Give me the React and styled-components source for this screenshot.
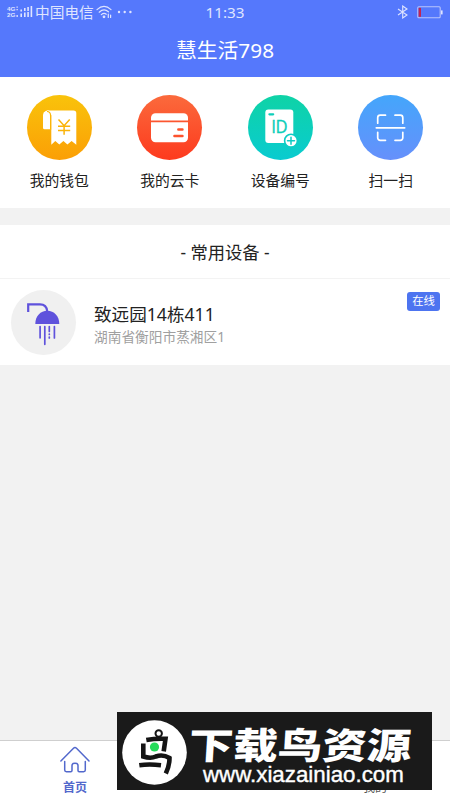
import styled, { createGlobalStyle } from 'styled-components';

const actions = [
  { label: '我的钱包', from: '#f9c30b', to: '#fb9f06', Icon: WalletIcon },
  { label: '我的云卡', from: '#fb6a3c', to: '#fd3a1e', Icon: CardIcon },
  { label: '设备编号', from: '#0fd3a6', to: '#09cbd0', Icon: DeviceIdIcon },
  { label: '扫一扫', from: '#44a6fb', to: '#6690fb', Icon: ScanIcon },
];

export default function App() {
  return (
    <>
      <GlobalStyle />
      <Screen>
        <Header>
          <StatusBar>
            <StatusSide>
              <SignalIcon />
              <Carrier>中国电信</Carrier>
              <WifiIcon />
              <DotsIcon />
            </StatusSide>
            <Clock>11:33</Clock>
            <StatusSide $end>
              <BluetoothIcon />
              <BatteryIcon />
            </StatusSide>
          </StatusBar>
          <Title>慧生活798</Title>
        </Header>

        <Actions>
          {actions.map(({ label, from, to, Icon }) => (
            <Action key={label}>
              <ActionCircle $from={from} $to={to}>
                <Icon />
              </ActionCircle>
              <ActionLabel>{label}</ActionLabel>
            </Action>
          ))}
        </Actions>

        <Devices>
          <SectionTitle>- 常用设备 -</SectionTitle>
          <Device>
            <DeviceCircle>
              <ShowerIcon />
            </DeviceCircle>
            <DeviceInfo>
              <DeviceName>致远园14栋411</DeviceName>
              <DeviceAddress>湖南省衡阳市蒸湘区1</DeviceAddress>
            </DeviceInfo>
            <Status>在线</Status>
          </Device>
        </Devices>

        <TabBar>
          <Tab $active>
            <HomeIcon />
            <span>首页</span>
          </Tab>
          <Tab />
          <Tab>
            <span>我的</span>
          </Tab>
        </TabBar>

        <Watermark>
          <BirdLogo />
          <WatermarkText>
            <WatermarkName>下载鸟资源</WatermarkName>
            <WatermarkUrl>www.xiazainiao.com</WatermarkUrl>
          </WatermarkText>
        </Watermark>
      </Screen>
    </>
  );
}

function SignalIcon() {
  return (
    <svg width='26' height='14' viewBox='0 0 26 14' fill='#dfe4ff'>
      <SignalText x='0' y='6' textLength='8.5' lengthAdjust='spacingAndGlyphs'>4G</SignalText>
      <SignalText x='0' y='12.2' textLength='8.5' lengthAdjust='spacingAndGlyphs'>2G</SignalText>
      <path d='M9.500 1.500h1.300v1.300H9.500zM9.500 4h1.300v1.300H9.500zM9.500 10h1.300v2H9.500zM13.400 4.500h1.600v2h-1.600zM13.400 8.500h1.600V12h-1.600zM17 3h1.600v3H17zM17 7.500h1.600V12H17zM20.300 2h1.600v4h-1.600zM20.300 7h1.600v5h-1.600zM23.600 1h1.600v11h-1.600z' />
    </svg>
  );
}

function WifiIcon() {
  return (
    <svg width='17' height='14' viewBox='0 0 17 14' fill='none' stroke='#dfe4ff' strokeWidth='1.2' strokeLinecap='round'>
      <path d='M1 4.6Q8 -1.8 15 4.6M3.2 7.2Q8 3 12.4 6.8M5.3 9.6Q8 7.4 10.3 9.2' />
      <circle cx='8' cy='11.8' r='.8' fill='#dfe4ff' />
      <path d='M12.3 9v3.500M14.600 10v2.500' />
    </svg>
  );
}

function DotsIcon() {
  return (
    <svg width='18' height='4' viewBox='0 0 18 4' fill='#dfe4ff'>
      <circle cx='4' cy='2' r='1.2' />
      <circle cx='9.7' cy='2' r='1.2' />
      <circle cx='15.4' cy='2' r='1.2' />
    </svg>
  );
}

function BluetoothIcon() {
  return (
    <svg width='12' height='14' viewBox='0 0 12 14' fill='none' stroke='#dfe4ff' strokeWidth='1.1'>
      <path d='M1 4l9 6-4.3 3V1L10 4 1 10' />
    </svg>
  );
}

function BatteryIcon() {
  return (
    <svg width='26' height='13' viewBox='0 0 26 13'>
      <rect x='.8' y='.8' width='22.4' height='11' rx='1' fill='none' stroke='#b9c3fb' strokeWidth='1.1' />
      <rect x='1.6' y='1.8' width='2.4' height='9' fill='#c32450' />
      <rect x='24' y='4.4' width='1.6' height='4' fill='#dfe4ff' />
    </svg>
  );
}

function WalletIcon() {
  return (
    <svg width='65' height='65' viewBox='0 0 65 65' fill='#fff'>
      <path d='M20 15.500h26.500a2.800 2.800 0 0 1 2.800 2.800v31.400l-4.700-3.600-4.200 3.500-4-3.500-4.100 3.500-4-3.500-4 3.600V20z' />
      <path d='M16 20a4.300 4.300 0 0 1 7.400-3v17.200H17.500a1.500 1.500 0 0 1-1.500-1.500z' />
      <path d='M20 16.500q3.600 0 3.600 4.200v14' fill='none' stroke='#fab40a' strokeWidth='1.2' />
      <path d='M31.500 24.500l5.600 6.200 5.600-6.200M31 31.300h12.200M31 35.500h12.200M37.100 30.700v9' fill='none' stroke='#fab40a' strokeWidth='1.500' />
    </svg>
  );
}

function CardIcon() {
  return (
    <svg width='65' height='65' viewBox='0 0 65 65' fill='#fff'>
      <path d='M14 25.500v-2.700a4.500 4.500 0 0 1 4.500-4.500h28a4.500 4.500 0 0 1 4.500 4.500v2.700z' />
      <path d='M14 27.200h37v15.600a4.500 4.500 0 0 1-4.500 4.500h-28a4.500 4.500 0 0 1-4.500-4.500z' />
      <path d='M41.300 34.500h4.200M37.400 41h8.100' stroke='#fc522d' strokeWidth='2.400' strokeLinecap='round' />
    </svg>
  );
}

function DeviceIdIcon() {
  return (
    <svg width='65' height='65' viewBox='0 0 65 65'>
      <rect x='17.300' y='14.400' width='28' height='33.600' rx='3' fill='#fff' />
      <path d='M21.400 19.300h3.800' stroke='#0dceb9' strokeWidth='2.200' strokeLinecap='round' />
      <IdText x='23.400' y='37.500' textLength='15.800' lengthAdjust='spacingAndGlyphs'>ID</IdText>
      <circle cx='43' cy='45.700' r='6.400' fill='#fff' stroke='#0cccc4' strokeWidth='1.600' />
      <path d='M39.500 45.700h7M43 42.200v7' stroke='#0cccc4' strokeWidth='1.500' strokeLinecap='round' />
    </svg>
  );
}

function ScanIcon() {
  return (
    <svg width='65' height='65' viewBox='0 0 65 65' fill='none' stroke='#fff' strokeWidth='1.700' strokeLinecap='round'>
      <path d='M19.700 28.200v-5.500a2.500 2.500 0 0 1 2.500-2.500h5.300M37 20.200h5.300a2.500 2.500 0 0 1 2.500 2.500v5.500M44.800 37.300v5.500a2.500 2.500 0 0 1-2.500 2.500H37M27.500 45.300h-5.300a2.500 2.500 0 0 1-2.500-2.500v-5.500M18.300 32.800h28.400' />
    </svg>
  );
}

function ShowerIcon() {
  return (
    <svg width='65' height='65' viewBox='0 0 65 65' fill='none' stroke='#5f52dc' strokeWidth='2.200'>
      <path d='M17.200 22v-7.700H29q6.600 0 7.200 7' />
      <path d='M24.300 34c0-8 5.200-13.300 12-13.300s12 5.300 12 13.300z' fill='#5f52dc' stroke='none' />
      <g strokeWidth='1.700' strokeLinecap='round'>
        <path d='M29.100 36.500v11.300M33.800 36.500v17.800M38.300 36.500v5M38.300 44v.500M38.300 47v1M43.400 36.500v11.500' />
      </g>
    </svg>
  );
}

function HomeIcon() {
  return (
    <svg width='30' height='27' viewBox='0 0 30 27' fill='none' stroke='#5268cc' strokeWidth='1.500' strokeLinecap='round' strokeLinejoin='round'>
      <path d='M.9 15L13.500 2.200q1.500-1.400 3 0L29 15' />
      <path d='M4.700 15.500v8.500q0 1.700 1.700 1.700h4.400q1.200 0 1.200-1.200v-5q0-2.200 3-2.200t3 2.200v5q0 1.200 1.200 1.200h4.400q1.700 0 1.700-1.700v-8.500' />
    </svg>
  );
}

function BirdLogo() {
  return (
    <svg width='65' height='65' viewBox='0 0 65 65' fill='none'>
      <circle cx='32.500' cy='32.500' r='32.300' fill='#fff' />
      <g stroke='#141414' strokeWidth='4.600'>
        <circle cx='36.700' cy='13.500' r='3.200' strokeWidth='2' />
        <path d='M24.300 20q9-1.600 19.200-1.200l-1.800 12.500' />
        <path d='M21.300 23.500v13q7.500 2.500 12.500 0 7-2.600 13.700 1.500 0 8-3.700 15.500' />
        <path d='M17.300 45.200q10-1.400 21.700 0' />
      </g>
      <circle cx='32.500' cy='27' r='4.600' fill='#25dc5b' />
    </svg>
  );
}

const GlobalStyle = createGlobalStyle`
  * {
    box-sizing: border-box;
  }

  body {
    margin: 0;
    font-family: 'Noto Sans', 'Noto Sans CJK SC', sans-serif;
    color: #222;
  }

  svg {
    display: block;
    flex-shrink: 0;
  }
`;

const Screen = styled.div`
  position: relative;
  display: flex;
  flex-direction: column;
  width: 450px;
  height: 800px;
  overflow: hidden;
  background: #f2f2f2;
`;

const Header = styled.header`
  height: 77px;
  background: #5578fc;
  color: #fff;
`;

const StatusBar = styled.div`
  display: grid;
  grid-template-columns: 1fr auto 1fr;
  align-items: center;
  height: 24px;
  padding: 0 7px;
`;

const StatusSide = styled.div`
  display: flex;
  align-items: center;
  justify-content: ${({ $end }) => ($end ? 'flex-end' : 'flex-start')};
  gap: ${({ $end }) => ($end ? '8px' : '2px')};
`;

const SignalText = styled.text`
  font-family: 'Liberation Sans', sans-serif;
  font-size: 5.4px;
  font-weight: 700;
`;

const Carrier = styled.span`
  font-size: 14.7px;
  line-height: 20px;
  color: #dfe4ff;
`;

const Clock = styled.span`
  font-size: 15.3px;
  line-height: 24px;
  color: #dfe4ff;
`;

const Title = styled.h1`
  margin: 0;
  font-size: 20.8px;
  font-weight: 400;
  line-height: 53px;
  text-align: center;
`;

const Actions = styled.nav`
  display: grid;
  grid-template-columns: repeat(4, 1fr);
  height: 131px;
  padding: 18px 4px 0 4px;
  background: #fff;
`;

const Action = styled.div`
  display: flex;
  flex-direction: column;
  align-items: center;
  gap: 8px;
`;

const ActionCircle = styled.div`
  width: 65px;
  height: 65px;
  border-radius: 50%;
  background: linear-gradient(${({ $from, $to }) => `${$from}, ${$to}`});
`;

const ActionLabel = styled.span`
  font-size: 14.8px;
  line-height: 24px;
`;

const IdText = styled.text`
  font-family: Lato, sans-serif;
  font-size: 17.5px;
  fill: #0dceb9;
  stroke: #0dceb9;
  stroke-width: 0.3px;
`;

const Devices = styled.section`
  margin-top: 17px;
  background: #fff;
`;

const SectionTitle = styled.h2`
  margin: 0;
  height: 54px;
  border-bottom: 1px solid #f3f3f3;
  font-size: 17.3px;
  font-weight: 400;
  line-height: 56px;
  text-align: center;
`;

const Device = styled.div`
  display: flex;
  height: 86px;
  padding: 11px 10px 0 11px;
`;

const DeviceCircle = styled.div`
  width: 65px;
  height: 65px;
  border-radius: 50%;
  background: #f0f0f0;
`;

const DeviceInfo = styled.div`
  flex: 1;
  padding: 12px 0 0 18px;
`;

const DeviceName = styled.div`
  font-size: 17.6px;
  line-height: 24px;
`;

const DeviceAddress = styled.div`
  font-size: 13.7px;
  line-height: 22px;
  color: #a0a0a0;
`;

const Status = styled.span`
  width: 33px;
  height: 19px;
  margin-top: 2px;
  border-radius: 3px;
  background: #4d74f0;
  color: #fff;
  font-size: 11.3px;
  line-height: 18px;
  text-align: center;
`;

const TabBar = styled.footer`
  display: grid;
  grid-template-columns: repeat(3, 1fr);
  height: 60px;
  margin-top: auto;
  border-top: 1px solid #cfcfcf;
  background: #fff;
`;

const Tab = styled.div`
  display: flex;
  flex-direction: column;
  align-items: center;
  justify-content: flex-end;
  gap: 6px;
  padding-bottom: 3px;
  color: ${({ $active }) => ($active ? '#5268cc' : '#555')};
  font-size: 12px;
  font-weight: ${({ $active }) => ($active ? 700 : 400)};
  line-height: 18px;
`;

const Watermark = styled.div`
  position: absolute;
  top: 712px;
  left: 117px;
  display: flex;
  width: 315px;
  height: 78px;
  padding: 8px 0 0 5px;
  background: #1a1a1a;
  color: #fff;
`;

const WatermarkText = styled.div`
  display: flex;
  flex-direction: column;
`;

const WatermarkName = styled.span`
  height: 39px;
  margin-left: 1px;
  font-family: 'Noto Sans CJK SC', sans-serif;
  font-size: 36.5px;
  font-weight: 900;
  line-height: 47px;
  transform: scaleX(1.22) skewX(-3deg);
  transform-origin: 0 100%;
  white-space: nowrap;
`;

const WatermarkUrl = styled.span`
  margin-left: 16px;
  font-family: 'Liberation Sans', sans-serif;
  font-size: 22.3px;
  line-height: 32px;
  -webkit-text-stroke: 0.4px #fff;
`;
